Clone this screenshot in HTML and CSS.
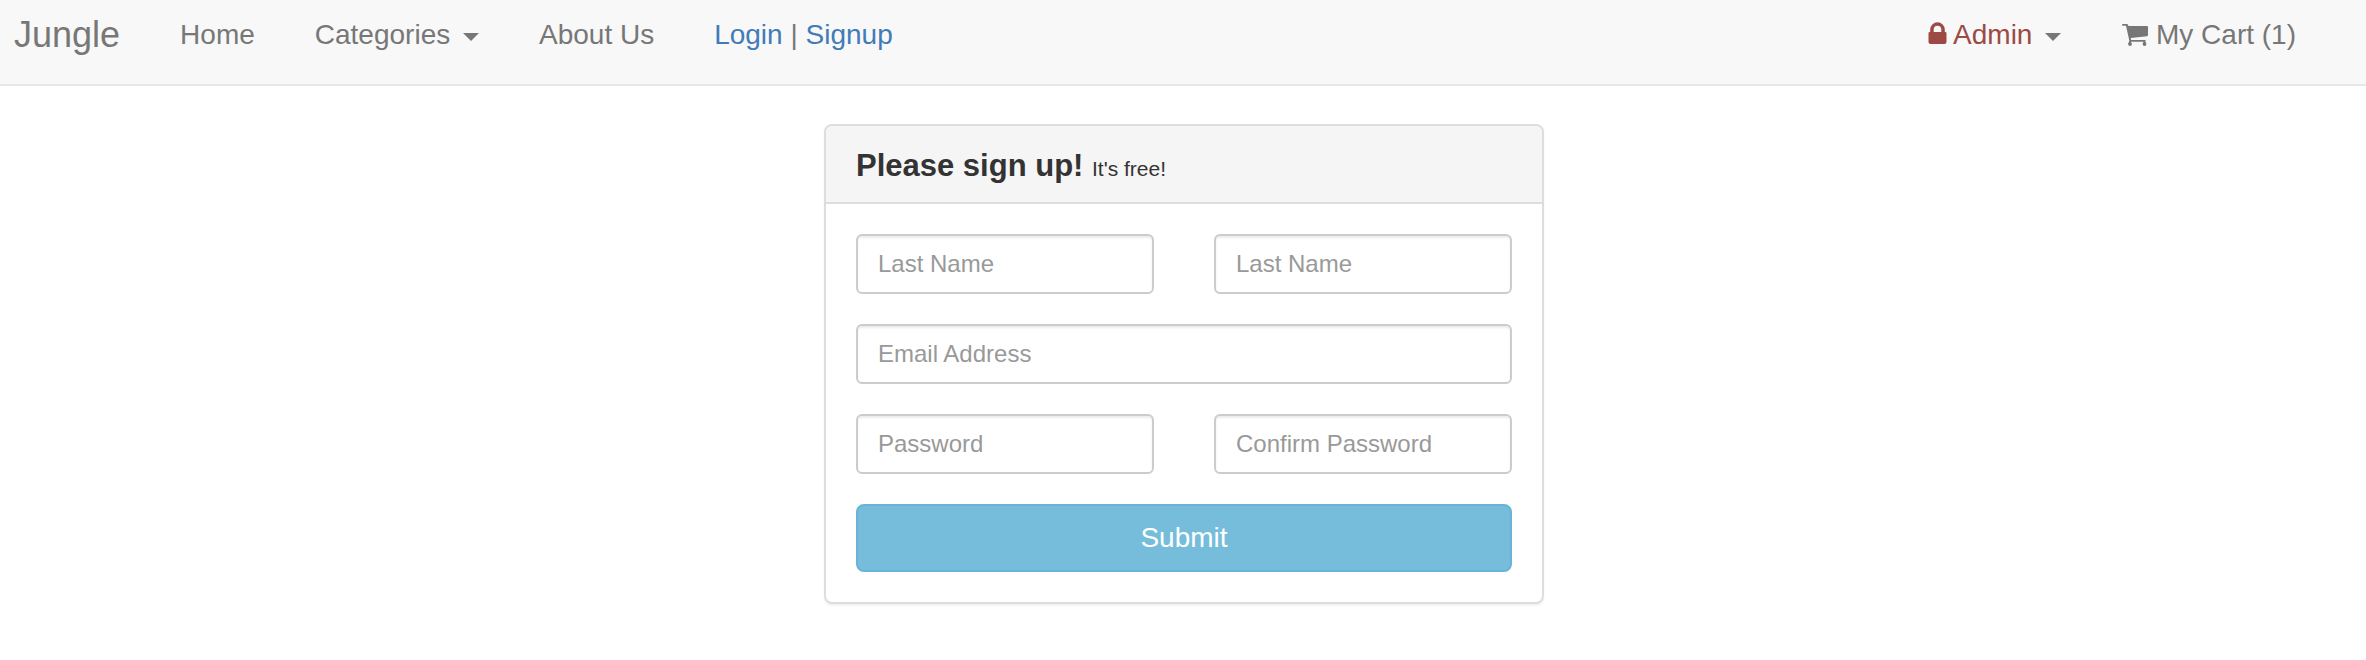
FILE: index.html
```html
<!DOCTYPE html>
<html lang="en">
<head>
<meta charset="utf-8">
<title>Jungle</title>
<meta name="viewport" content="width=device-width, initial-scale=1">
<link rel="stylesheet" href="styles.css">
</head>
<body>
<nav class="navbar">
  <a class="brand" href="#">Jungle</a>
  <ul class="nav">
    <li><a class="nav-link" href="#">Home</a></li>
    <li><button class="nav-link" type="button" aria-haspopup="true">Categories <span class="caret"></span></button></li>
    <li><a class="nav-link" href="#">About Us</a></li>
    <li class="nav-text"><a class="link" href="#">Login</a> | <a class="link" href="#">Signup</a></li>
  </ul>
  <ul class="nav nav-right">
    <li><button class="nav-link" type="button" aria-haspopup="true"><span class="admin"><svg class="icon-lock" viewBox="0 0 19 24" aria-hidden="true"><path fill-rule="evenodd" d="M2.200 10V7.500a7.300 7.200 0 0 1 14.600 0V10h.4q1.300 0 1.300 1.300V20q0 2-2 2h-14q-2 0-2-2v-8.700Q.5 10 1.800 10ZM5.700 10h7.600V7.500a3.800 3.800 0 0 0-7.600 0Z"/></svg> Admin</span> <span class="caret"></span></button></li>
    <li><a class="nav-link" href="#"><svg class="icon-cart" viewBox="0 0 27 24" aria-hidden="true"><path d="M1.800 2h4q1 0 1.300 1l.3 1H26q1 0 1 1v8q0 1-1 1.200L9.800 16l.3 2H24.500v4h-2v-2.200H10L9 22H7.500l.8-3.500L5 3.700H1.800q-.8 0-.8-.85T1.800 2Z"/><circle cx="9" cy="22" r="1.900"/><circle cx="23.500" cy="22" r="1.900"/></svg> My Cart (1)</a></li>
  </ul>
</nav>
<main class="page">
  <section class="panel">
    <header class="panel-heading">
      <h1 class="panel-title">Please sign up! <small>It's free!</small></h1>
    </header>
    <form class="form">
      <input class="field" type="text" placeholder="Last Name" aria-label="First name">
      <input class="field" type="text" placeholder="Last Name" aria-label="Last name">
      <input class="field wide" type="email" placeholder="Email Address" aria-label="Email address">
      <input class="field" type="password" placeholder="Password" aria-label="Password">
      <input class="field" type="password" placeholder="Confirm Password" aria-label="Confirm password">
      <button class="submit wide" type="submit">Submit</button>
    </form>
  </section>
</main>
</body>
</html>
```

FILE: styles.css
```css
* {
  box-sizing: border-box;
}

body {
  margin: 0;
  background: #fff;
  color: #333;
  font-family: "Helvetica Neue", "Liberation Sans", Arial, sans-serif;
  font-size: 28px;
  line-height: 40px;
}

a {
  text-decoration: none;
}

.navbar {
  display: flex;
  align-items: flex-start;
  padding: 15px 40px 29px 14px;
  background: #f8f8f8;
  border-bottom: 2px solid #e7e7e7;
  color: #777;
}

.brand {
  margin-right: 30px;
  color: #777;
  font-size: 36px;
}

.nav {
  display: flex;
  margin: 0;
  padding: 0;
  list-style: none;
}

.nav-right {
  margin-left: auto;
}

.nav-link {
  display: block;
  padding: 0 30px;
  border: 0;
  background: none;
  color: #777;
  font: inherit;
  cursor: pointer;
}

.nav-text {
  padding: 0 30px;
}

.link {
  color: #427bb7;
}

.admin {
  color: #9d4a44;
}

.caret {
  display: inline-block;
  margin-left: 5px;
  border-top: 8px solid #777;
  border-right: 8px solid transparent;
  border-left: 8px solid transparent;
  vertical-align: middle;
}

.icon-lock,
.icon-cart {
  height: 24px;
  fill: currentColor;
  vertical-align: -2px;
}

.icon-lock {
  width: 19px;
}

.icon-cart {
  width: 27px;
}

.page {
  padding: 38px 30px 38px 32px;
}

.panel {
  max-width: 720px;
  margin: 0 auto;
  border: 2px solid #ddd;
  border-radius: 8px;
  background: #fff;
  box-shadow: 0 2px 2px rgba(0, 0, 0, 0.05);
}

.panel-heading {
  padding: 22px 30px 18px;
  border-bottom: 2px solid #ddd;
  border-radius: 6px 6px 0 0;
  background: #f5f5f5;
}

.panel-title {
  margin: 0;
  font-size: 31px;
  line-height: 36px;
}

.panel-title small {
  font-size: 21px;
  font-weight: 400;
  line-height: 1;
}

.form {
  display: grid;
  grid-template-columns: 1fr 1fr;
  gap: 30px 60px;
  padding: 30px;
}

.wide {
  grid-column: 1 / -1;
}

.field {
  width: 100%;
  height: 60px;
  padding: 10px 20px;
  border: 2px solid #ccc;
  border-radius: 6px;
  background: #fff;
  box-shadow: inset 0 2px 2px rgba(0, 0, 0, 0.075);
  color: #555;
  font: inherit;
  font-size: 24px;
}

.field::placeholder {
  color: #999;
  opacity: 1;
}

.submit {
  height: 68px;
  border: 2px solid #67b4d6;
  border-radius: 8px;
  background: #76bddb;
  color: #fff;
  font: inherit;
  cursor: pointer;
}
```
